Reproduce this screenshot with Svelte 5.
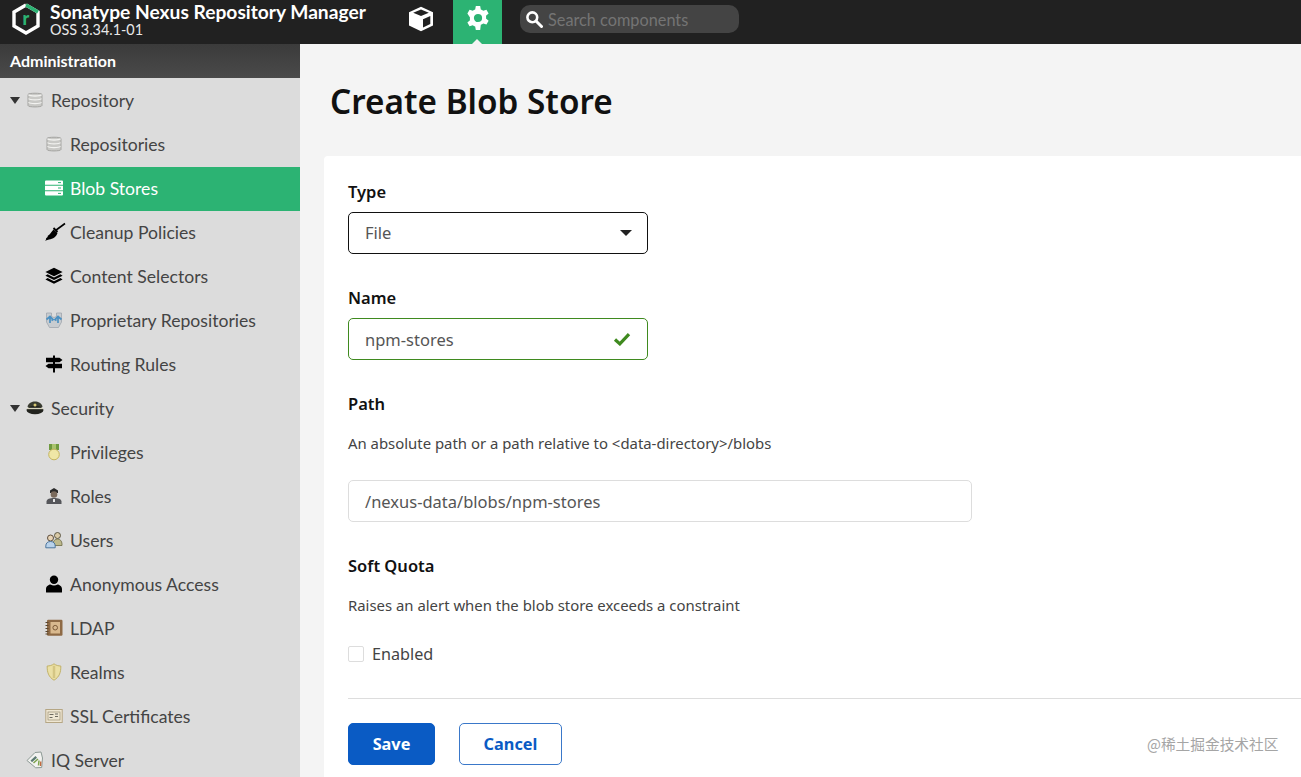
<script>
  const nav = [
    { label: 'Repository', icon: 'db', level: 0, open: true },
    { label: 'Repositories', icon: 'db', level: 1 },
    { label: 'Blob Stores', icon: 'server', level: 1, active: true },
    { label: 'Cleanup Policies', icon: 'broom', level: 1 },
    { label: 'Content Selectors', icon: 'layers', level: 1 },
    { label: 'Proprietary Repositories', icon: 'prop', level: 1 },
    { label: 'Routing Rules', icon: 'sign', level: 1 },
    { label: 'Security', icon: 'cap', level: 0, open: true },
    { label: 'Privileges', icon: 'medal', level: 1 },
    { label: 'Roles', icon: 'officer', level: 1 },
    { label: 'Users', icon: 'users', level: 1 },
    { label: 'Anonymous Access', icon: 'user', level: 1 },
    { label: 'LDAP', icon: 'book', level: 1 },
    { label: 'Realms', icon: 'shield', level: 1 },
    { label: 'SSL Certificates', icon: 'cert', level: 1 },
    { label: 'IQ Server', icon: 'tags', level: 0, leaf: true }
  ];
</script>

{#snippet icon(name)}
  <svg class="ico" viewBox="0 0 18 18" aria-hidden="true">
    {#if name === 'db'}
      <path d="M2 3.500C2 1.800 16 1.800 16 3.500V14.500C16 16.400 2 16.400 2 14.500Z" fill="#c9c9c6" stroke="#a5a5a2" stroke-width="1"/>
      <path d="M2.500 3.800C4 5.400 14 5.400 15.500 3.800M2.500 7.600C4 9.200 14 9.200 15.500 7.600M2.500 11.400C4 13 14 13 15.500 11.400" fill="none" stroke="#f2f2f0" stroke-width="1.300"/>
    {:else if name === 'server'}
      <path d="M0 2.500a1 1 0 0 1 1-1h16a1 1 0 0 1 1 1v3.200H0ZM0 6.800h18v4.400H0ZM0 12.300h18v3.200a1 1 0 0 1-1 1H1a1 1 0 0 1-1-1Z" fill="#fff"/>
      <path d="M13 3.600h3M13 9h3M13 14.400h3" stroke="#2cb373" stroke-width="1"/>
    {:else if name === 'broom'}
      <path d="M10.500 7.500 20 .5" stroke="#000" stroke-width="1.600" fill="none"/>
      <path d="M8.500 5 12.500 9" stroke="#000" stroke-width="1.800" fill="none"/>
      <path d="M8.500 6.500 12.500 10C11.500 13.500 8 16 4 16.500L0 17.800C1 16.800 1.500 15.800 1 15.200 2 14.800 3 13.800 2.800 12.800 5 12 6 9 8.500 6.500Z" fill="#000"/>
    {:else if name === 'layers'}
      <path d="M9 .8 17.600 5 9 9.200.4 5Z" fill="#000"/>
      <path d="M2.600 7.300.4 8.800 9 13l8.600-4.200-2.200-1.500L9 10.400Z" fill="#000"/>
      <path d="M2.600 11 .4 12.600 9 16.800l8.600-4.200-2.200-1.600L9 14.200Z" fill="#000"/>
    {:else if name === 'prop'}
      <path d="M1.500 2h5v3.500L9 6.500l2.500-1V2h5v9l-3 5.500h-9l-3-5.500Z" fill="#c8ccd0" stroke="#9fa6ad" stroke-width=".8"/>
      <path d="M1.500 8.500 5 5.500l3 3-1.500 1M16.500 8.500 13 5.500l-3 3 1.500 1M5 6v6M13 6v6" fill="none" stroke="#4a90c2" stroke-width="1.700"/>
    {:else if name === 'sign'}
      <path d="M8 .5h2V17.500H8Z" fill="#000"/>
      <path d="M1 2.800h13.500L17.500 5l-3 2.300H1ZM17 8.800H3.500L.5 11l3 2.200H17Z" fill="#000"/>
    {:else if name === 'cap'}
      <path d="M1.500 8C2 4 6 2.500 9 2.500S16 4 16.500 8Z" fill="#3a3c31"/>
      <ellipse cx="9" cy="11" rx="8.500" ry="4.300" fill="#22231e"/>
      <path d="M1 9.500h16" stroke="#d9d6bf" stroke-width="1.300"/>
      <circle cx="9" cy="6" r="1.500" fill="#d8c873"/>
    {:else if name === 'medal'}
      <path d="M4 1h10v6H4Z" fill="#6f9a3f"/>
      <path d="M7 1h4v6H7Z" fill="#a9c36e"/>
      <circle cx="9" cy="11.500" r="5.300" fill="#efe6a6" stroke="#c4b560" stroke-width="1"/>
    {:else if name === 'officer'}
      <path d="M5 3.500 9 1l4 2.500V6H5Z" fill="#2a2a2a"/>
      <circle cx="9" cy="7.500" r="3.300" fill="#7a6a5c"/>
      <path d="M1.500 17v-2.500C1.500 12 5 11 9 11s7.500 1 7.500 3.500V17Z" fill="#55565a"/>
      <path d="M8 12h2v3H8Z" fill="#e6e6e6"/>
    {:else if name === 'users'}
      <circle cx="12.500" cy="4.500" r="3" fill="#d9c9a6" stroke="#4f4b38" stroke-width=".9"/>
      <path d="M8 13c0-3 2-5 4.500-5S17 10 17 13v1.500H8Z" fill="#bdb98c" stroke="#6d6a45" stroke-width=".8"/>
      <circle cx="5.500" cy="7" r="3" fill="#e7d3b5" stroke="#4f3f30" stroke-width=".9"/>
      <path d="M.8 16.800V15c0-3 2-4.500 4.700-4.500S10.200 12 10.200 15v1.800Z" fill="#b9d2ea" stroke="#3f6c96" stroke-width=".9"/>
    {:else if name === 'user'}
      <circle cx="9" cy="4.700" r="4.200" fill="#000"/>
      <path d="M1 17v-3c0-3 3-4.500 4.500-4.500 1 .7 2.200 1 3.500 1s2.500-.3 3.500-1c1.500 0 4.500 1.500 4.500 4.500v3a.5.5 0 0 1-.5.5H1.500A.5.5 0 0 1 1 17Z" fill="#000"/>
    {:else if name === 'book'}
      <rect x="2" y=".8" width="15.500" height="16" rx="1.200" fill="#8e6a45"/>
      <rect x="5.500" y="3" width="9.500" height="11.500" fill="#d9b98e"/>
      <circle cx="10.200" cy="8.700" r="2.300" fill="none" stroke="#7b5a38" stroke-width="1"/>
      <path d="M.5 3.500h3M.5 6.500h3M.5 9.500h3M.5 12.500h3M.5 15h3" stroke="#5a4630" stroke-width="1.100"/>
    {:else if name === 'shield'}
      <path d="M9 .8C11 2.400 13.500 3 15.800 3 16 9 14.500 14 9 17.200 3.500 14 2 9 2.200 3 4.500 3 7 2.400 9 .8Z" fill="#ebe0a4" stroke="#c2b26a" stroke-width="1"/>
      <path d="M9 2.800V15" stroke="#d4c684" stroke-width="2.500"/>
    {:else if name === 'cert'}
      <rect x=".8" y="2.500" width="16.400" height="13" fill="#efe7d3" stroke="#b5a684" stroke-width="1"/>
      <rect x="3" y="5" width="12" height="8" fill="none" stroke="#9a8f74" stroke-width=".7"/>
      <path d="M4.500 7.500h4M10 7h3M10 9.500h3M4.500 10.500h3" stroke="#6d6a60" stroke-width="1"/>
    {:else if name === 'tags'}
      <path d="M9 1.500 15 1l1.500 6-.8 9.500-6 .3L1 9.500Z" fill="#f2f2f0" stroke="#8d9a95" stroke-width="1"/>
      <path d="M4.500 9.500 9.500 5l1.500 1.800-5 4.500Z" fill="#5c7a73"/>
      <path d="M7.500 12 12 8M13 9.500l-.5 5" stroke="#7ca34d" stroke-width="1.500"/>
      <path d="M14.800 10.500l-.3 4.500" stroke="#c46a3f" stroke-width="1.400"/>
    {/if}
  </svg>
{/snippet}

<div class="app">
  <header class="topbar">
    <div class="brand">
      <svg class="logo" viewBox="0 0 28 32" aria-hidden="true">
        <path d="M14 2 26 9V23L14 30 2 23V9L14 2" fill="none" stroke="#fff" stroke-width="3.400"/>
        <path d="M14 2 26 9" fill="none" stroke="#2cb373" stroke-width="3.400"/>
        <text x="14" y="22" text-anchor="middle" class="logo-r">r</text>
      </svg>
      <div class="brand-text">
        <div class="product">Sonatype Nexus Repository Manager</div>
        <div class="version">OSS 3.34.1-01</div>
      </div>
    </div>
    <div class="top-btn">
      <svg viewBox="0 0 26 26" width="26" height="26" aria-hidden="true">
        <path d="M13 .8 25 6.200V19.500L13 25.200 1 19.500V6.200Z" fill="#fff"/>
        <path d="M13 3.600 5.200 6.700 13 9.900 20.800 6.700Z" fill="#212121"/>
        <path d="M15 13.200 22.300 10V18L15 21.500Z" fill="#212121"/>
      </svg>
    </div>
    <div class="top-tab">
      <svg viewBox="0 0 24 24" width="26" height="26" aria-hidden="true">
        <path fill="#fff" fill-rule="evenodd" d="M10 1h4l.6 3.100a8.200 8.200 0 0 1 2.200 1.300l3-1 2 3.400-2.400 2.100a8.200 8.200 0 0 1 0 2.600l2.400 2.100-2 3.400-3-1a8.200 8.200 0 0 1-2.200 1.300L14 23h-4l-.6-3.100a8.200 8.200 0 0 1-2.200-1.300l-3 1-2-3.400 2.400-2.100a8.200 8.200 0 0 1 0-2.600L2.200 7.800l2-3.400 3 1a8.200 8.200 0 0 1 2.200-1.300ZM12 8.200a3.800 3.800 0 1 0 0 7.600 3.800 3.800 0 0 0 0-7.600Z"/>
      </svg>
      <span class="notch"></span>
    </div>
    <div class="search">
      <svg viewBox="0 0 18 18" width="18" height="18" aria-hidden="true">
        <circle cx="7.300" cy="7.300" r="4.900" fill="none" stroke="#fff" stroke-width="2.600"/>
        <path d="M11 11 16.500 16.500" stroke="#fff" stroke-width="3" stroke-linecap="round"/>
      </svg>
      <span>Search components</span>
    </div>
  </header>

  <div class="body">
    <aside class="sidebar">
      <div class="side-title">Administration</div>
      <nav>
        {#each nav as item}
          <div class="row" class:child={item.level === 1} class:active={item.active} class:leaf={item.leaf}>
            {#if item.open}<span class="caret"></span>{/if}
            {@render icon(item.icon)}
            <span class="label">{item.label}</span>
          </div>
        {/each}
      </nav>
    </aside>

    <main class="main">
      <h1>Create Blob Store</h1>
      <section class="card">
        <div class="field">
          <div class="name">Type</div>
          <div class="control select"><span>File</span><span class="sel-caret"></span></div>
        </div>
        <div class="field">
          <div class="name">Name</div>
          <div class="control valid">
            <span>npm-stores</span>
            <svg viewBox="0 0 16 13" width="18" height="14" aria-hidden="true"><path d="M1.500 7 6 11 14.500 2" fill="none" stroke="#3f8a1f" stroke-width="3"/></svg>
          </div>
        </div>
        <div class="field">
          <div class="name">Path</div>
          <p class="help">An absolute path or a path relative to &lt;data-directory&gt;/blobs</p>
          <div class="control wide"><span>/nexus-data/blobs/npm-stores</span></div>
        </div>
        <div class="field">
          <div class="name">Soft Quota</div>
          <p class="help">Raises an alert when the blob store exceeds a constraint</p>
          <div class="check"><span class="box"></span><span>Enabled</span></div>
        </div>
        <div class="footer">
          <button class="btn primary">Save</button>
          <button class="btn secondary">Cancel</button>
        </div>
      </section>
    </main>
  </div>
  <div class="watermark">@稀土掘金技术社区</div>
</div>

<style>
  :global(body) { margin: 0; }
  .app {
    width: 1301px; height: 777px; overflow: hidden; position: relative;
    display: flex; flex-direction: column;
    font-family: "Noto Sans", "Open Sans", sans-serif;
  }
  .topbar {
    height: 44px; flex: none; display: flex; align-items: center;
    background: #212121; color: #fff; font-family: Lato, sans-serif;
  }
  .brand { display: flex; align-items: center; width: 388px; padding-left: 12px; box-sizing: border-box; }
  .logo { width: 28px; height: 32px; margin-right: 10px; margin-top: -6px; }
  .logo-r { fill: #2cb373; font: 900 18px Lato, sans-serif; }
  .brand-text { margin-top: -6px; }
  .product { font-size: 19.200px; font-weight: 700; line-height: 22px; white-space: nowrap; }
  .version { font-size: 14.400px; line-height: 14px; color: #e8e8e8; }
  .top-btn { width: 65px; height: 44px; display: flex; align-items: center; justify-content: center; padding-bottom: 6px; box-sizing: border-box; }
  .top-tab {
    width: 49px; height: 44px; background: #2cb373; position: relative;
    display: flex; align-items: center; justify-content: center; padding-bottom: 8px; box-sizing: border-box;
  }
  .notch {
    position: absolute; left: 19px; bottom: 0; width: 0; height: 0;
    border-left: 5px solid transparent; border-right: 5px solid transparent; border-bottom: 5px solid #f4f4f4;
  }
  .search {
    margin-left: 18px; width: 219px; height: 28px; margin-top: -6px; border-radius: 10px; background: #444;
    display: flex; align-items: center; gap: 5px; padding-left: 5px; box-sizing: border-box;
    color: #747474; font-size: 16.300px;
  }
  .body { flex: 1; display: flex; min-height: 0; }
  .sidebar { width: 300px; flex: none; background: #dcdcdc; font-family: Lato, sans-serif; }
  .side-title {
    height: 34px; line-height: 34px; padding-left: 10px; color: #fff; font-weight: 700; font-size: 16px;
    background: linear-gradient(#3b3b3b, #4a4a4a);
  }
  nav { padding-top: 1px; }
  .row {
    height: 44px; display: flex; align-items: center; color: #444; font-size: 17.600px;
    padding: 0 0 2px 26px; position: relative; box-sizing: border-box;
  }
  .row.child { padding-left: 45px; }
  .row.active { background: #2cb373; color: #fff; }
  .ico { width: 18px; height: 18px; flex: none; margin-right: 7px; overflow: visible; }
  .caret {
    position: absolute; left: 10px; top: 18px; width: 0; height: 0;
    border-left: 5px solid transparent; border-right: 5px solid transparent; border-top: 7px solid #333;
  }
  .main { flex: 1; background: #f4f4f4; padding-left: 24px; min-width: 0; }
  h1 {
    margin: 0; height: 112px; line-height: 115px; padding-left: 6px; font-size: 33.300px; font-weight: 600; color: #111;
  }
  .card { background: #fff; border-radius: 4px 0 0 0; padding: 24px 0 0 24px; height: 621px; box-sizing: border-box; }
  .field { margin-bottom: 32px; }
  .name { font-size: 16.500px; font-weight: 600; color: #111; line-height: 24px; margin-bottom: 8px; }
  .help { margin: 18px 0 26px; font-size: 14.900px; line-height: 19px; padding-bottom: 1px; color: #444; }
  .control {
    width: 300px; height: 42px; box-sizing: border-box; border: 1px solid #ddd; border-radius: 5px;
    display: flex; align-items: center; justify-content: space-between; padding: 0 16px;
    font-size: 16.500px; color: #555;
  }
  .select { border-color: #111; padding-bottom: 1px; }
  .sel-caret { width: 0; height: 0; border-left: 6px solid transparent; border-right: 6px solid transparent; border-top: 6px solid #222; margin-right: -1px; }
  .valid { border-color: #3f8a1f; }
  .wide { width: 624px; }
  .check { display: flex; align-items: center; gap: 8px; font-size: 16.200px; color: #444; height: 24px; }
  .box { width: 16px; height: 16px; box-sizing: border-box; border: 1px solid #ddd; border-radius: 2px; }
  .footer { border-top: 1px solid #ddd; padding-top: 24px; display: flex; gap: 24px; }
  .btn {
    height: 42px; border-radius: 5px; font: 700 16.300px "Noto Sans", sans-serif; box-sizing: border-box; padding: 0;
  }
  .primary { width: 87px; background: #0a5bc4; border: 1px solid #0a5bc4; color: #fff; }
  .secondary { width: 103px; background: #fff; border: 1px solid #3a78c9; color: #0a5bc4; }
  .watermark {
    position: absolute; left: 1147px; top: 734px; font-size: 14.700px; line-height: 20px; color: #a5a5a5;
    font-family: "Noto Sans CJK SC", sans-serif; white-space: nowrap;
  }
</style>
